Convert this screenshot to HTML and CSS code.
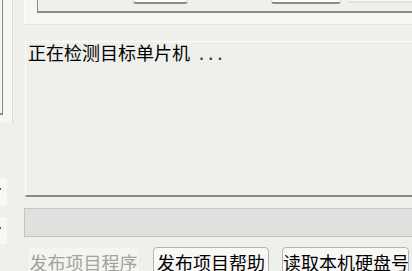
FILE: index.html
```html
<!DOCTYPE html>
<html lang="zh-CN">
  <head>
    <meta charset="UTF-8" />
    <title>下载工具</title>
    <link rel="stylesheet" href="styles.css">
  </head>
  <body>
    <div class="window">
      <div class="side">
        <div class="side-panel">
          <div class="side-box"></div>
        </div>
        <div class="spin first"></div>
        <div class="spin"></div>
      </div>

      <div class="main">
        <div class="top-panel">
          <div class="top-box">
            <span class="tool-btn btn-a"></span>
            <span class="tool-btn btn-b"></span>
            <span class="tool-btn btn-c"></span>
          </div>
        </div>

        <div class="log">
          <p>正在检测目标单片机<span class="dots">...</span></p>
        </div>

        <div class="progress"></div>

        <div class="actions">
          <button class="btn publish" disabled>发布项目程序</button>
          <button class="btn help">发布项目帮助</button>
          <button class="btn disk">读取本机硬盘号</button>
        </div>
      </div>
    </div>
  </body>
</html>
```

FILE: styles.css
```css
* {
  box-sizing: border-box;
}

body {
  margin: 0;
  padding: 0;
  width: 412px;
  height: 271px;
  overflow: hidden;
  background-color: #efefec;
  font-family: "Noto Sans CJK SC", sans-serif;
  font-size: 18px;
  color: #000;
}

.window {
  display: grid;
  grid-template-columns: 24px 400px;
}

/* left column, mostly cut off */
.side {
  display: flex;
  flex-direction: column;
}

.side-panel {
  width: 13px;
  height: 123px;
  background-color: #f6f6f3;
  border-right: 1px solid #dcdcd8;
}

.side-box {
  width: 3px;
  height: 115px;
  border-right: 1px solid #8a8a88;
  border-bottom: 2px solid #8a8a88;
}

.spin {
  position: relative;
  width: 7px;
  height: 27px;
  margin-top: 11px;
  background-color: #f7f7f4;
}
.spin.first {
  margin-top: 55px;
  height: 28px;
}
.spin::before {
  content: "";
  position: absolute;
  left: 0;
  top: 10px;
  width: 1px;
  height: 2px;
  background-color: #555;
}

/* main column */
.main {
  display: flex;
  flex-direction: column;
}

.top-panel {
  height: 25px;
  background-color: #f6f6f3;
  border-left: 1px solid #fbfbf9;
  border-bottom: 1px solid #e4e4e0;
}

.top-box {
  display: flex;
  align-items: flex-end;
  height: 34px;
  margin-top: -21px;
  margin-left: 12px;
  padding-bottom: 7px;
  background-color: #efefec;
  border-left: 1px solid #8a8a88;
  border-bottom: 2px solid #8a8a88;
}

.tool-btn {
  display: block;
  height: 20px;
  background-color: #fbfbfa;
  border: 1px solid #d6d6d3;
  border-bottom: 2px solid #8c8c8a;
  border-radius: 3px;
}
.btn-a {
  width: 58px;
  margin-left: 95px;
}
.btn-b {
  width: 73px;
  margin-left: 83px;
}
.btn-c {
  width: 80px;
  margin-left: 7px;
  margin-bottom: 1px;
  background-color: #f7f7f4;
  border-color: #e2e2de;
}

.log {
  height: 156px;
  margin-top: 16px;
  margin-left: 1px;
  padding-left: 2px;
  background-color: #efefec;
  border-top: 1px solid #fdfdfc;
  border-left: 1px solid #fdfdfc;
  border-bottom: 2px solid #8a8a88;
}

.log p {
  margin: 0;
  line-height: 20px;
  white-space: nowrap;
}

.dots {
  margin-left: 9px;
  letter-spacing: 4.3px;
  color: #333;
}

.progress {
  height: 29px;
  margin-top: 11px;
  background-color: #e0e0de;
  border: 1px solid #c4c4c2;
}

.actions {
  display: flex;
  margin-top: 10px;
  margin-left: 3px;
}

.btn {
  height: 30px;
  padding: 0;
  font-family: inherit;
  font-size: 18px;
  line-height: 22px;
  text-align: center;
  white-space: nowrap;
  color: #000;
  background-color: #f8f8f6;
  border: 1px solid #b4b4b2;
  border-radius: 4px;
}
.btn.publish {
  width: 113px;
  color: #a2a2a0;
  background-color: #f4f4f1;
  border-color: #ebebe8;
}
.btn.help {
  width: 116px;
  margin-left: 13px;
}
.btn.disk {
  width: 127px;
  margin-left: 13px;
}
```
